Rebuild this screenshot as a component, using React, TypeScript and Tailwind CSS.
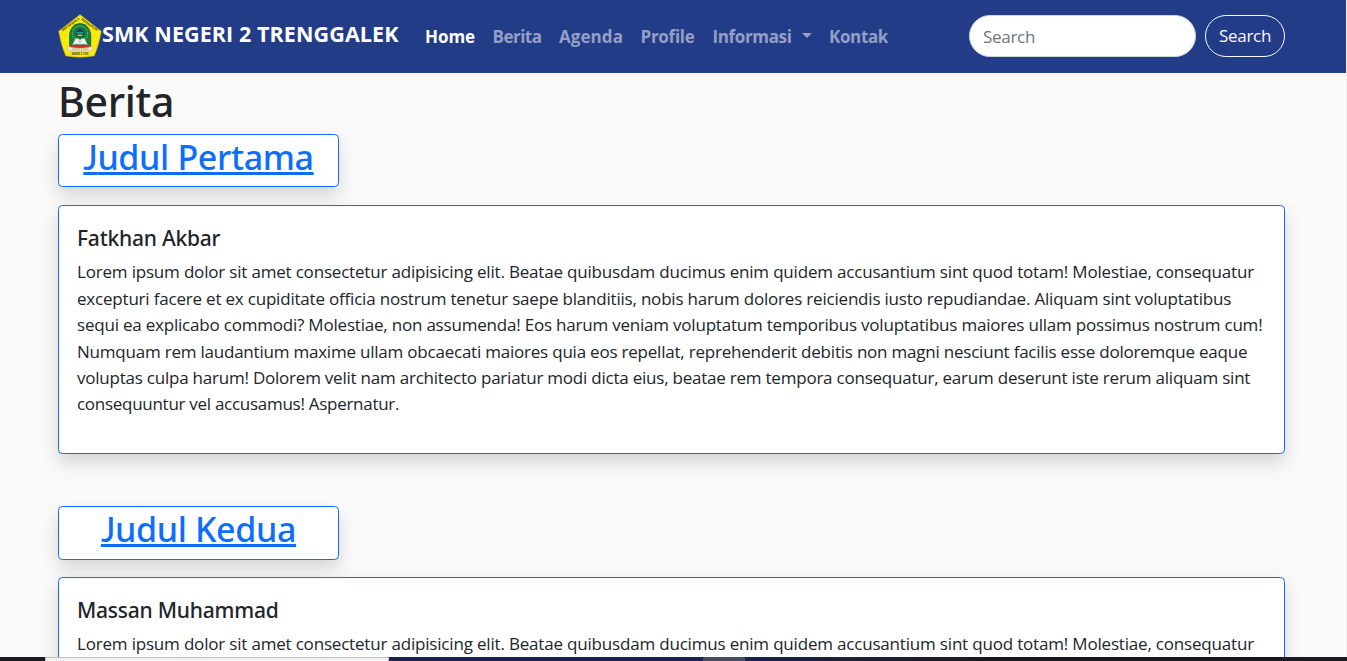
const nav = [
  { label: "Home", cls: "w-[50px] mr-[17.5px] text-white tracking-[-0.07px]" },
  { label: "Berita", cls: "w-[49px] mr-[17.5px] text-[#959fc6] tracking-[-0.5px]" },
  { label: "Agenda", cls: "w-[64px] mr-[17.5px] text-[#959fc6] tracking-[0.07px]" },
  { label: "Profile", cls: "w-[54px] mr-[18px] text-[#959fc6] tracking-[-0.27px]" },
  { label: "Informasi", cls: "w-[99px] mr-[17.5px] text-[#959fc6] tracking-[-0.36px]", caret: true },
  { label: "Kontak", cls: "w-[59px] text-[#959fc6] tracking-[-0.37px]" },
];

const lines = [
  { text: "Lorem ipsum dolor sit amet consectetur adipisicing elit. Beatae quibusdam ducimus enim quidem accusantium sint quod totam! Molestiae, consequatur", cls: "tracking-[-0.187px]" },
  { text: "excepturi facere et ex cupiditate officia nostrum tenetur saepe blanditiis, nobis harum dolores reiciendis iusto repudiandae. Aliquam sint voluptatibus", cls: "tracking-[-0.2px]" },
  { text: "sequi ea explicabo commodi? Molestiae, non assumenda! Eos harum veniam voluptatum temporibus voluptatibus maiores ullam possimus nostrum cum!", cls: "tracking-[-0.207px]" },
  { text: "Numquam rem laudantium maxime ullam obcaecati maiores quia eos repellat, reprehenderit debitis non magni nesciunt facilis esse doloremque eaque", cls: "tracking-[-0.217px]" },
  { text: "voluptas culpa harum! Dolorem velit nam architecto pariatur modi dicta eius, beatae rem tempora consequatur, earum deserunt iste rerum aliquam sint", cls: "tracking-[-0.225px]" },
  { text: "consequuntur vel accusamus! Aspernatur.", cls: "tracking-[-0.28px]" },
];

const articles = [
  { title: "Judul Pertama", author: "Fatkhan Akbar", lines, titleCls: "h-[53px] mb-[18px]", cardCls: "h-[249px] mb-[52px]" },
  { title: "Judul Kedua", author: "Massan Muhammad", lines: lines.slice(0, 1), titleCls: "h-[54px] mb-[17px]", cardCls: "h-[249px]" },
];

function Logo() {
  return (
    <svg viewBox="0 0 44 44" className="h-11 w-11 shrink-0">
      <defs>
        <path id="arc" d="M4.5 17.5 L22 5.3 L39.5 17.5" />
      </defs>
      <path d="M22 0.6 43.4 17.2 Q41 31 36.3 42 Q22 44.6 7.7 42 Q3 31 0.6 17.2Z" fill="#f8ea0b" stroke="#a99a22" strokeWidth="0.5" />
      <text fontSize="3.2" fontWeight="700" fill="#4a4a12" fontFamily="Open Sans, sans-serif">
        <textPath href="#arc" textLength="42">SMK NEGERI 2 TRENGGALEK</textPath>
      </text>
      <path d="M11.5 32V20Q13 10.5 22 9.3 31 10.5 32.8 20V32Z" fill="#16803b" stroke="#0c5a2a" strokeWidth="0.6" />
      <circle cx="22" cy="19.5" r="7.6" fill="none" stroke="#73b58a" strokeWidth="1.1" strokeDasharray="1 1" />
      <circle cx="22" cy="19.5" r="5" fill="#0d6b36" />
      <path d="M22 14.6 25.6 17.2 24.8 21.2H19.2L18.4 17.2Z" fill="#203e62" />
      <path d="M18.8 18.2h6.4v1.4h-6.4z" fill="#2aa8cf" />
      <path d="M19.7 20.7h4.6v1.2h-4.6z" fill="#e8d31b" />
      <path d="M14.2 31 17.4 24.3Q20.3 23.8 22 25.4 23.8 23.8 26.7 24.3L29.8 31Q25 29.4 22 31 19 29.4 14.2 31Z" fill="#f2f2ed" stroke="#5d6e65" strokeWidth="0.5" />
      <path d="M22 25.4V31" stroke="#56645d" strokeWidth="0.5" />
      <path d="M12 30.8Q22 33 32 30.8V33Q22 35.2 12 33Z" fill="#d93328" />
      <path d="M9.5 32.5Q22 37 34.8 32.5L34 36.2Q22 38.7 10.2 36.2Z" fill="#f3efe5" stroke="#a69c86" strokeWidth="0.4" />
      <path d="M14 35.1Q22 36.8 30.4 35.1" fill="none" stroke="#77736b" strokeWidth="0.7" strokeDasharray="1.2 0.6" />
      <text x="22" y="40.6" fontSize="2.9" fontWeight="700" textAnchor="middle" textLength="17" fill="#4a4a12" fontFamily="Open Sans, sans-serif">SMKN 2 TGX</text>
    </svg>
  );
}

export default function App() {
  return (
    <div className="flex h-[661px] w-full flex-col overflow-hidden bg-[#fafafa] font-['Open_Sans',sans-serif] text-[#212529]">
      <div className="flex min-h-0 flex-1">
        <div className="min-w-0 flex-1 overflow-hidden">
          <nav className="flex h-[73px] items-center bg-[#223c88] pb-px pl-[58px] pr-[61px]">
            <Logo />
            <span className="w-[323px] shrink-0 whitespace-nowrap pb-[3px] text-[21.5px] font-bold tracking-[0.09px] text-white">SMK NEGERI 2 TRENGGALEK</span>
            {nav.map((n) => (
              <a key={n.label} className={`flex shrink-0 items-center justify-between whitespace-nowrap pt-px text-[17px] font-bold ${n.cls}`}>
                {n.label}
                {n.caret && <span className="-mt-0.5 border-x-[5.3px] border-t-[5.3px] border-x-transparent border-t-[#959fc6]" />}
              </a>
            ))}
            <div className="ml-auto flex shrink-0 gap-[9px]">
              <input placeholder="Search" className="h-[42px] w-[227px] rounded-full border border-[#ced4da] bg-white px-[13px] text-[17px] tracking-[-0.3px] placeholder:text-[#6c757d]" />
              <button className="h-[42px] w-[80px] rounded-full border border-[#f8f9fa] text-[17px] tracking-[-0.3px] text-[#f8f9fa]">Search</button>
            </div>
          </nav>
          <main className="pl-[58px] pr-[61px]">
            <h1 className="h-[61px] whitespace-nowrap font-['Noto_Sans'] text-[41px] font-medium leading-[57px] tracking-[-0.3px]">Berita</h1>
            {articles.map((a) => (
              <section key={a.title}>
                <div className={`w-[281px] rounded-[4.4px] border border-[#0d6efd] bg-white text-center shadow-[0_8.8px_17.6px_rgba(0,0,0,0.15)] ${a.titleCls}`}>
                  <a className="inline-block whitespace-nowrap font-['Noto_Sans'] text-[34px] font-medium leading-[44px] tracking-[-0.35px] text-[#0d6efd] underline decoration-[3px] underline-offset-[2px] [text-decoration-skip-ink:none] first-letter:font-['Lato']">{a.title}</a>
                </div>
                <div className={`rounded-[4.4px] border border-[#0d6efd] bg-white px-[18px] pt-[19px] shadow-[0_8.8px_17.6px_rgba(0,0,0,0.15)] ${a.cardCls}`}>
                  <h5 className="mb-[8px] font-['Noto_Sans'] text-[21px] font-medium leading-[26.4px] tracking-[-0.22px]">{a.author}</h5>
                  {a.lines.map((l) => (
                    <p key={l.text} className={`whitespace-nowrap text-[17px] leading-[26.4px] ${l.cls}`}>{l.text}</p>
                  ))}
                </div>
              </section>
            ))}
          </main>
        </div>
        <div className="w-px bg-[#f0f0f0]" />
      </div>
      <div className="flex h-1 shrink-0">
        <div className="w-[45px] bg-[#1b1a22]" />
        <div className="w-[344px] border border-b-0 border-[#bdbdbd] bg-[#f2f2f2]" />
        <div className="w-[314px] bg-[#1b2149]" />
        <div className="w-[42px] bg-[#484c63]" />
        <div className="flex-1 bg-linear-to-r from-[#1b2149] to-[#1a1a22] to-40%" />
      </div>
    </div>
  );
}
